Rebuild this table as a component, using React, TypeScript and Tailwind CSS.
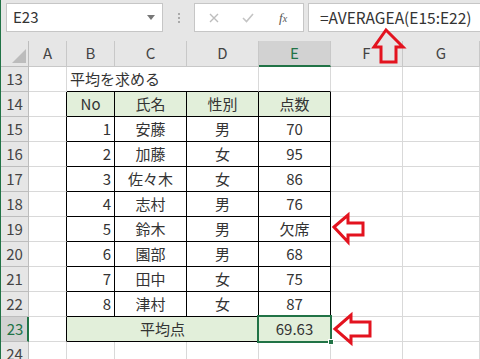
import type { ReactNode } from 'react';

const FONT = "font-['Noto_Sans_CJK_JP','Noto_Sans',sans-serif]";

type Cell = {
	text?: ReactNode;
	cls: string;
	selected?: boolean;
};

const people = [
	['1', '安藤', '男', '70'],
	['2', '加藤', '女', '95'],
	['3', '佐々木', '女', '86'],
	['4', '志村', '男', '76'],
	['5', '鈴木', '男', '欠席'],
	['6', '園部', '男', '68'],
	['7', '田中', '女', '75'],
	['8', '津村', '女', '87'],
];

const grid = 'border-r border-b border-[#d9d9d9]';
const boxed = 'border-r border-b border-black';

function rowCells(row: number): Cell[] {
	const aCls = row >= 14 && row <= 23 ? 'border-r border-r-black border-b border-b-[#d9d9d9]' : grid;
	const rest: Cell[] = [{ cls: grid }, { cls: grid }];

	if (row === 13) {
		return [
			{ cls: grid },
			{
				text: '平均を求める',
				cls: 'border-b border-black justify-start pl-[3px] overflow-visible whitespace-nowrap',
			},
			{ cls: 'border-b border-black' },
			{ cls: 'border-r border-r-[#d9d9d9] border-b border-b-black' },
			{ cls: 'border-r border-r-[#d9d9d9] border-b border-b-black' },
			...rest,
		];
	}
	if (row === 14) {
		const h = `${boxed} bg-[#e2efda] justify-center`;
		return [
			{ cls: aCls },
			{ text: 'No', cls: h },
			{ text: '氏名', cls: h },
			{ text: '性別', cls: h },
			{ text: '点数', cls: h },
			...rest,
		];
	}
	if (row >= 15 && row <= 22) {
		const p = people[row - 15];
		return [
			{ cls: aCls },
			{ text: p[0], cls: `${boxed} justify-end pr-[3px]` },
			{ text: p[1], cls: `${boxed} justify-center` },
			{ text: p[2], cls: `${boxed} justify-center` },
			{ text: p[3], cls: `${boxed} justify-center` },
			...rest,
		];
	}
	if (row === 23) {
		return [
			{ cls: aCls },
			{ text: '平均点', cls: `${boxed} bg-[#e2efda] justify-center col-span-3` },
			{ text: '69.63', cls: `${boxed} bg-[#e2efda] justify-center relative`, selected: true },
			...rest,
		];
	}
	return [{ cls: grid }, { cls: grid }, { cls: grid }, { cls: grid }, { cls: grid }, ...rest];
}

const rows = [13, 14, 15, 16, 17, 18, 19, 20, 21, 22, 23, 24];

function Arrows() {
	return (
		<svg className="pointer-events-none absolute top-0 left-0" width="480" height="359">
			<g fill="none" stroke="#e3131f" strokeWidth="3" strokeLinejoin="miter">
				<polygon points="385,30 402,47 395,47 395,62 380,62 380,47 373,47" />
				<polygon points="333,227 347,215 347,223 362,223 362,235 347,235 347,242" />
				<polygon points="334,329 350,315 350,322 369,322 369,336 350,336 350,343" />
			</g>
		</svg>
	);
}

export default function App() {
	return (
		<div className={`relative h-[359px] w-[480px] overflow-hidden border-l border-[#217346] bg-white ${FONT}`}>
			{/* formula bar */}
			<div className="flex h-[41px] items-start bg-[#e6e6e6] pt-[3px]">
				<div className="ml-[5px] flex h-[29px] w-[157px] items-center justify-between border border-[#c6c6c6] bg-white pr-[7px] pl-[6px]">
					<span className="text-[15px] text-[#333]">E23</span>
					<svg width="8" height="5" viewBox="0 0 8 5">
						<polygon points="0,0 8,0 4,5" fill="#777" />
					</svg>
				</div>
				<div className="flex h-[29px] w-[31px] flex-col items-center justify-center gap-[2px]">
					<span className="h-[2px] w-[2px] bg-[#aaa]" />
					<span className="h-[2px] w-[2px] bg-[#aaa]" />
					<span className="h-[2px] w-[2px] bg-[#aaa]" />
				</div>
				<div className="flex h-[29px] w-[110px] items-center border border-[#c6c6c6] bg-white">
					<svg className="ml-[14px]" width="10" height="10" viewBox="0 0 10 10">
						<path d="M1 1 L9 9 M9 1 L1 9" stroke="#bdbdbd" strokeWidth="1.4" />
					</svg>
					<svg className="ml-[23px]" width="12" height="10" viewBox="0 0 12 10">
						<path d="M1 5 L4.5 8.5 L11 1" stroke="#c4c4c4" strokeWidth="1.6" fill="none" />
					</svg>
					<span className="ml-[25px] font-['Liberation_Serif',serif] text-[13px] text-[#555] italic">
						f<span className="text-[10px]">x</span>
					</span>
				</div>
				<div className="ml-[4px] flex h-[29px] flex-1 items-center border-y border-l border-[#c6c6c6] bg-white pl-[11px]">
					<span className="text-[15.5px] text-[#333]">=AVERAGEA(E15:E22)</span>
				</div>
			</div>

			{/* sheet */}
			<div className="grid grid-cols-[28px_38px_48px_72px_72px_72px_72px_77px] text-[15px] text-[#333]">
				<div className="relative h-[26px] border-r border-b border-[#bdbdbd] bg-[#e6e6e6]">
					<svg className="absolute right-[2px] bottom-[3px]" width="14" height="14" viewBox="0 0 14 14">
						<polygon points="14,0 14,14 0,14" fill="#bcbcbc" />
					</svg>
				</div>
				{['A', 'B', 'C', 'D'].map((c) => (
					<div
						key={c}
						className="flex h-[26px] items-center justify-center border-r border-b border-[#c8c8c8] bg-[#e6e6e6] text-[#444]"
					>
						{c}
					</div>
				))}
				<div className="flex h-[26px] items-center justify-center border-r border-r-[#c8c8c8] border-b-2 border-b-[#217346] bg-[#d2d2d2] text-[#217346]">
					E
				</div>
				{['F', 'G'].map((c) => (
					<div
						key={c}
						className="flex h-[26px] items-center justify-center border-r border-b border-[#c8c8c8] bg-[#e6e6e6] text-[#444]"
					>
						{c}
					</div>
				))}

				{rows.map((row) => (
					<Row key={row} row={row} />
				))}
			</div>

			<Arrows />
		</div>
	);
}

function Row({ row }: { row: number }) {
	const active = row === 23;
	return (
		<>
			<div
				className={
					active
						? 'flex h-[25px] items-center justify-center border-r-2 border-r-[#217346] border-b border-b-[#bdbdbd] bg-[#d2d2d2] pl-[2px] text-[#217346]'
						: 'flex h-[25px] items-center justify-center border-r border-b border-[#bdbdbd] bg-[#e6e6e6] text-[#444]'
				}
			>
				{row}
			</div>
			{rowCells(row).map((cell, i) => (
				<div key={i} className={`flex h-[25px] items-center ${cell.cls}`}>
					{cell.text}
					{cell.selected && (
						<>
							<div className="pointer-events-none absolute -top-[2px] -right-[2px] -bottom-[2px] -left-[2px] border-2 border-[#217346]" />
							<div className="absolute -right-[4px] -bottom-[4px] h-[6px] w-[6px] border border-white bg-[#217346]" />
						</>
					)}
				</div>
			))}
		</>
	);
}
